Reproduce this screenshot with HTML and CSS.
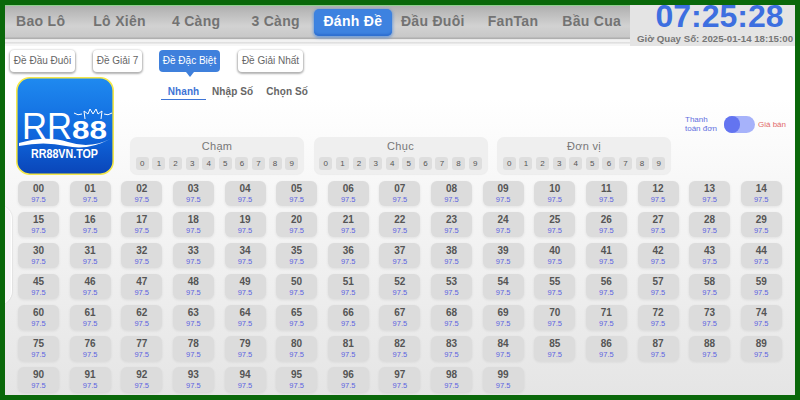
FILE: index.html
```html
<!DOCTYPE html>
<html lang="vi">
<head>
<meta charset="utf-8">
<title>Đánh Đề</title>
<link rel="stylesheet" href="styles.css">
</head>
<body>
<div class="frame">
  <header class="top">
    <nav class="tabs">
      <span class="tab t1">Bao Lô</span>
      <span class="tab t2">Lô Xiên</span>
      <span class="tab t3">4 Càng</span>
      <span class="tab t4">3 Càng</span>
      <span class="tab t5 active">Đánh Đề</span>
      <span class="tab t6">Đầu Đuôi</span>
      <span class="tab t7">FanTan</span>
      <span class="tab t8">Bầu Cua</span>
    </nav>
    <div class="clock">
      <div class="time">07:25:28</div>
      <div class="draw">Giờ Quay Số: 2025-01-14 18:15:00</div>
    </div>
  </header>
  <main class="main">
    <div class="subtabs">
      <span class="sub s1">Đề Đầu Đuôi</span>
      <span class="sub s2">Đề Giải 7</span>
      <span class="sub s3 on">Đề Đặc Biệt</span>
      <span class="sub s4">Đề Giải Nhất</span>
    </div>
    <div class="head">
      <svg class="logo" viewBox="0 0 98 98" width="98" height="98">
        <defs>
          <linearGradient id="lg" x1="0" y1="0" x2="0" y2="1">
            <stop offset="0" stop-color="#1f8af0"/>
            <stop offset="0.6" stop-color="#0f66dc"/>
            <stop offset="1" stop-color="#0a45b8"/>
          </linearGradient>
        </defs>
        <rect x="0.8" y="0.8" width="96.4" height="96.4" rx="13" fill="url(#lg)" stroke="#f4e84a" stroke-width="1.6"/>
        <text x="6" y="62" class="lg-rr" textLength="50" lengthAdjust="spacingAndGlyphs">RR</text>
        <text x="56" y="62" class="lg-88" textLength="35" lengthAdjust="spacingAndGlyphs">88</text>
        <path d="M58 36q4 3 8 1M96 36q-4 3-8 1M69 42l-1-8 4 3 2-5 3 5 3-5 2 5 4-3-1 8" fill="none" stroke="#fff" stroke-width="1"/>
        <path d="M3 66Q30 58 52 65T94 62Q72 74 50 69T3 69Z" fill="#fff"/>
        <text x="48.5" y="81" text-anchor="middle" class="lg-top" textLength="67" lengthAdjust="spacingAndGlyphs">RR88VN.TOP</text>
      </svg>
      <div class="controls">
        <div class="modes-row">
          <div class="modes">
            <span class="mode m-on">Nhanh</span>
            <span class="mode">Nhập Số</span>
            <span class="mode">Chọn Số</span>
          </div>
          <div class="switch-row">
            <span class="sw-left">Thanh<br>toán đơn</span>
            <span class="switch"><span class="knob"></span></span>
            <span class="sw-right">Giá bán</span>
          </div>
        </div>
        <div class="groups">
          <section class="group">
            <h3>Chạm</h3>
            <div class="digits"><b>0</b><b>1</b><b>2</b><b>3</b><b>4</b><b>5</b><b>6</b><b>7</b><b>8</b><b>9</b></div>
          </section>
          <section class="group">
            <h3>Chục</h3>
            <div class="digits"><b>0</b><b>1</b><b>2</b><b>3</b><b>4</b><b>5</b><b>6</b><b>7</b><b>8</b><b>9</b></div>
          </section>
          <section class="group">
            <h3>Đơn vị</h3>
            <div class="digits"><b>0</b><b>1</b><b>2</b><b>3</b><b>4</b><b>5</b><b>6</b><b>7</b><b>8</b><b>9</b></div>
          </section>
        </div>
      </div>
    </div>
    <div class="grid" id="grid">
      <div class="cell"><b>00</b><i>97.5</i></div><div class="cell"><b>01</b><i>97.5</i></div><div class="cell"><b>02</b><i>97.5</i></div><div class="cell"><b>03</b><i>97.5</i></div><div class="cell"><b>04</b><i>97.5</i></div><div class="cell"><b>05</b><i>97.5</i></div><div class="cell"><b>06</b><i>97.5</i></div><div class="cell"><b>07</b><i>97.5</i></div><div class="cell"><b>08</b><i>97.5</i></div><div class="cell"><b>09</b><i>97.5</i></div>
      <div class="cell"><b>10</b><i>97.5</i></div><div class="cell"><b>11</b><i>97.5</i></div><div class="cell"><b>12</b><i>97.5</i></div><div class="cell"><b>13</b><i>97.5</i></div><div class="cell"><b>14</b><i>97.5</i></div><div class="cell"><b>15</b><i>97.5</i></div><div class="cell"><b>16</b><i>97.5</i></div><div class="cell"><b>17</b><i>97.5</i></div><div class="cell"><b>18</b><i>97.5</i></div><div class="cell"><b>19</b><i>97.5</i></div>
      <div class="cell"><b>20</b><i>97.5</i></div><div class="cell"><b>21</b><i>97.5</i></div><div class="cell"><b>22</b><i>97.5</i></div><div class="cell"><b>23</b><i>97.5</i></div><div class="cell"><b>24</b><i>97.5</i></div><div class="cell"><b>25</b><i>97.5</i></div><div class="cell"><b>26</b><i>97.5</i></div><div class="cell"><b>27</b><i>97.5</i></div><div class="cell"><b>28</b><i>97.5</i></div><div class="cell"><b>29</b><i>97.5</i></div>
      <div class="cell"><b>30</b><i>97.5</i></div><div class="cell"><b>31</b><i>97.5</i></div><div class="cell"><b>32</b><i>97.5</i></div><div class="cell"><b>33</b><i>97.5</i></div><div class="cell"><b>34</b><i>97.5</i></div><div class="cell"><b>35</b><i>97.5</i></div><div class="cell"><b>36</b><i>97.5</i></div><div class="cell"><b>37</b><i>97.5</i></div><div class="cell"><b>38</b><i>97.5</i></div><div class="cell"><b>39</b><i>97.5</i></div>
      <div class="cell"><b>40</b><i>97.5</i></div><div class="cell"><b>41</b><i>97.5</i></div><div class="cell"><b>42</b><i>97.5</i></div><div class="cell"><b>43</b><i>97.5</i></div><div class="cell"><b>44</b><i>97.5</i></div><div class="cell"><b>45</b><i>97.5</i></div><div class="cell"><b>46</b><i>97.5</i></div><div class="cell"><b>47</b><i>97.5</i></div><div class="cell"><b>48</b><i>97.5</i></div><div class="cell"><b>49</b><i>97.5</i></div>
      <div class="cell"><b>50</b><i>97.5</i></div><div class="cell"><b>51</b><i>97.5</i></div><div class="cell"><b>52</b><i>97.5</i></div><div class="cell"><b>53</b><i>97.5</i></div><div class="cell"><b>54</b><i>97.5</i></div><div class="cell"><b>55</b><i>97.5</i></div><div class="cell"><b>56</b><i>97.5</i></div><div class="cell"><b>57</b><i>97.5</i></div><div class="cell"><b>58</b><i>97.5</i></div><div class="cell"><b>59</b><i>97.5</i></div>
      <div class="cell"><b>60</b><i>97.5</i></div><div class="cell"><b>61</b><i>97.5</i></div><div class="cell"><b>62</b><i>97.5</i></div><div class="cell"><b>63</b><i>97.5</i></div><div class="cell"><b>64</b><i>97.5</i></div><div class="cell"><b>65</b><i>97.5</i></div><div class="cell"><b>66</b><i>97.5</i></div><div class="cell"><b>67</b><i>97.5</i></div><div class="cell"><b>68</b><i>97.5</i></div><div class="cell"><b>69</b><i>97.5</i></div>
      <div class="cell"><b>70</b><i>97.5</i></div><div class="cell"><b>71</b><i>97.5</i></div><div class="cell"><b>72</b><i>97.5</i></div><div class="cell"><b>73</b><i>97.5</i></div><div class="cell"><b>74</b><i>97.5</i></div><div class="cell"><b>75</b><i>97.5</i></div><div class="cell"><b>76</b><i>97.5</i></div><div class="cell"><b>77</b><i>97.5</i></div><div class="cell"><b>78</b><i>97.5</i></div><div class="cell"><b>79</b><i>97.5</i></div>
      <div class="cell"><b>80</b><i>97.5</i></div><div class="cell"><b>81</b><i>97.5</i></div><div class="cell"><b>82</b><i>97.5</i></div><div class="cell"><b>83</b><i>97.5</i></div><div class="cell"><b>84</b><i>97.5</i></div><div class="cell"><b>85</b><i>97.5</i></div><div class="cell"><b>86</b><i>97.5</i></div><div class="cell"><b>87</b><i>97.5</i></div><div class="cell"><b>88</b><i>97.5</i></div><div class="cell"><b>89</b><i>97.5</i></div>
      <div class="cell"><b>90</b><i>97.5</i></div><div class="cell"><b>91</b><i>97.5</i></div><div class="cell"><b>92</b><i>97.5</i></div><div class="cell"><b>93</b><i>97.5</i></div><div class="cell"><b>94</b><i>97.5</i></div><div class="cell"><b>95</b><i>97.5</i></div><div class="cell"><b>96</b><i>97.5</i></div><div class="cell"><b>97</b><i>97.5</i></div><div class="cell"><b>98</b><i>97.5</i></div><div class="cell"><b>99</b><i>97.5</i></div>
    </div>
    <div class="side-notch"></div>
  </main>
</div>
</body>
</html>
```
FILE: styles.css
```css
* { box-sizing: border-box; }
html, body { margin: 0; height: 100%; overflow: hidden; }
body { font-family: "Liberation Sans", Arial, sans-serif; }
.frame {
  width: 800px; height: 400px;
  border: 5px solid #0a680a;
  display: flex; flex-direction: column;
  overflow: hidden;
  background: #fff;
}
.top { height: 41px; display: flex; flex: none; }
.tabs {
  width: 625px; height: 41px;
  display: flex; align-items: flex-start;
  border-top: 1px solid #8fd08f;
  background: linear-gradient(#b0b0b0 0, #d2d2d2 50%, #c8c8c8 78%, #a5a5a5 80%, #b5b5b5 82%, #f2f2f2 84%, #f2f2f2 90%, #d4d4d4 92%, #f6f6f6 95%);
}
.tab {
  font-size: 14px; font-weight: 700; color: #737373;
  line-height: 31px; height: 31px; letter-spacing: 0.3px; white-space: nowrap;
}
.t1 { margin-left: 11px; }
.t2 { margin-left: 28px; }
.t3 { margin-left: 26px; }
.t4 { margin-left: 31px; }
.t5 { margin-left: 14px; }
.t6 { margin-left: 9px; }
.t7 { margin-left: 23px; }
.t8 { margin-left: 24px; }
.active {
  width: 78px; text-align: center; color: #fff;
  height: 27px; line-height: 25px; margin-top: 3px;
  border-radius: 5px;
  background: #3d82e0;
  box-shadow: 0 1px 3px 1px rgba(61,130,224,.6), inset 0 -3px 2px -1px #2e6fd0;
}
.clock {
  flex: 1; height: 41px; background: #e4e4e4;
  display: flex; flex-direction: column; align-items: center;
  overflow: hidden;
}
.time {
  font-size: 32px; font-weight: 700; color: #3d6fe0; line-height: 30px;
  margin: -4px 0 0 14px; height: 29px; flex: none;
}
.draw { font-size: 9.7px; font-weight: 700; color: #767676; line-height: 12px; margin: 3px 0 0 5px; white-space: nowrap; }
.main {
  flex: 1; position: relative;
  background: linear-gradient(#fff 0, #fff 15%, #f4f4f4 50%, #e5e5e5 100%);
  min-height: 0;
}
.subtabs { display: flex; padding: 4px 0 0 5px; height: 30px; }
.sub {
  height: 22px; line-height: 21px; font-size: 10px; color: #666; background: #fff;
  border-radius: 4px; text-align: center; white-space: nowrap;
  box-shadow: 0 1px 2px 1px rgba(0,0,0,.3);
  position: relative;
}
.s1 { width: 65px; }
.s2 { width: 49px; margin-left: 18px; }
.s3 { width: 61px; margin-left: 17px; }
.s4 { width: 65px; margin-left: 18px; }
.on { background: #3f80dc; color: #fff; box-shadow: none; }
.on::after {
  content: ""; position: absolute; left: 50%; top: 22px; margin-left: -4px;
  border: 4px solid transparent; border-top: 5px solid #3f80dc; border-bottom: 0;
}
.head { display: flex; padding-left: 11px; height: 105px; align-items: flex-start; margin-top: -4px; }
.logo { flex: none; display: block; margin-top: 5px; }
.lg-rr { font: 400 36px "Liberation Sans", sans-serif; fill: #fff; }
.lg-88 { font: 700 25px "Liberation Sans", sans-serif; fill: #fff; }
.lg-top { font: 700 12px "Liberation Sans", sans-serif; fill: #fff; }
.controls { flex: 1; margin-left: 16px; display: flex; flex-direction: column; }
.modes-row { height: 65px; display: flex; align-items: flex-start; position: relative; }
.modes { display: flex; margin: 12px 0 0 31px; }
.mode { font-size: 10px; font-weight: 700; color: #666; line-height: 15px; height: 16px; margin-left: 13px; letter-spacing: 0.1px; white-space: nowrap; }
.mode:first-child { margin-left: 0; color: #3d74d6; border-bottom: 1px solid #3d74d6; width: 45px; text-align: center; }
.mode:nth-child(2) { margin-left: 6px; }
.switch-row { position: absolute; left: 555px; top: 43px; display: flex; align-items: center; white-space: nowrap; }
.sw-left { width: 39px; font-size: 8px; line-height: 9px; color: #5f6fe0; }
.switch { width: 31px; height: 17px; border-radius: 9px; background: #a6b2fa; display: block; position: relative; }
.knob { position: absolute; left: 0; top: 0; width: 16px; height: 17px; border-radius: 9px; background: #6374f0; }
.sw-right { font-size: 8px; color: #e26a6a; margin-left: 3px; }
.groups { display: flex; gap: 9.5px; height: 37px; }
.group {
  width: 174px; height: 37px; background: #efefef; border-radius: 7px;
  box-shadow: 0 1px 1px rgba(0,0,0,.05);
  display: flex; flex-direction: column; align-items: center;
}
.group h3 { margin: 0; font-size: 11px; font-weight: 400; color: #777; line-height: 14px; height: 20px; padding-top: 2px; letter-spacing: 0.3px; }
.digits { display: flex; gap: 3.6px; }
.digits b {
  width: 13px; height: 13px; border-radius: 3px; background: #dedede; color: #555;
  font-size: 8px; font-weight: 400; line-height: 13px; text-align: center;
}
.grid {
  display: grid;
  grid-template-columns: repeat(15, 41px);
  grid-auto-rows: 25px;
  column-gap: 10.64px; row-gap: 6px;
  padding-left: 13px;
  margin-top: 4px;
}
.cell {
  background: #dcdcdc; border-radius: 6px; text-align: center;
  box-shadow: 0 1px 3px rgba(0,0,0,.08);
  display: flex; flex-direction: column; align-items: center;
  padding-top: 2px;
}
.cell b { font-size: 10px; font-weight: 700; color: #555; line-height: 11px; }
.cell i { font-size: 7.5px; font-style: normal; color: #5c64e0; line-height: 10px; margin-top: 1px; }
.side-notch {
  position: absolute; left: -12px; top: 159px; width: 19px; height: 100px;
  border-radius: 0 14px 14px 0;
  background: #f7f7f7; border-right: 1px solid #fff;
  box-shadow: 1px 0 1px rgba(0,0,0,.06);
}
```
